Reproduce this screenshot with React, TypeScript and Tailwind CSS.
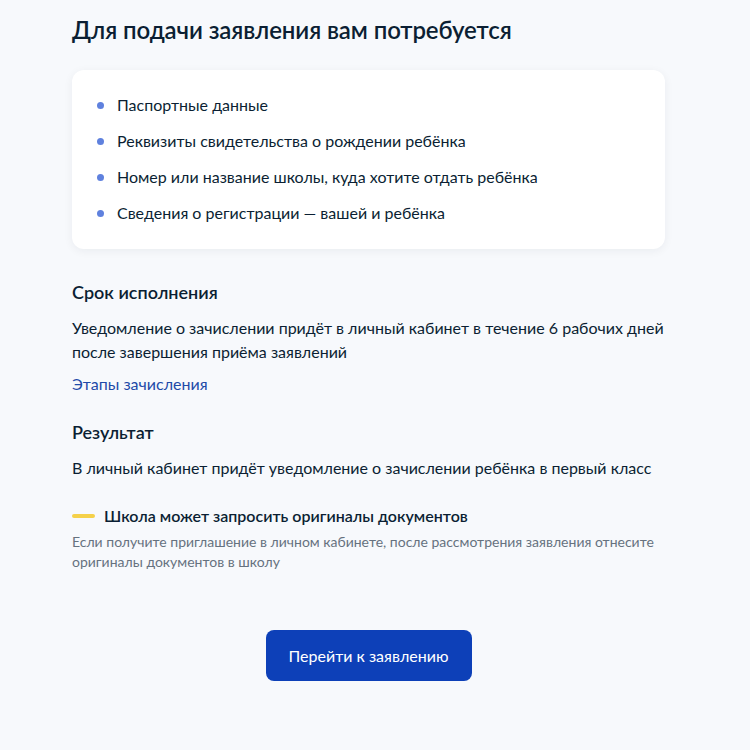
import React from "react";

const items = [
  "Паспортные данные",
  "Реквизиты свидетельства о рождении ребёнка",
  "Номер или название школы, куда хотите отдать ребёнка",
  "Сведения о регистрации — вашей и ребёнка",
];

export default function App() {
  return (
    <div
      className="min-h-[750px] w-[750px] bg-[#f7f9fc] text-[#0b1f33]"
      style={{ fontFamily: "Lato, 'Noto Sans', sans-serif" }}
    >
      <div className="ml-[72px] w-[593px] pt-[14px] pb-[68px]">
        <h1 className="text-[24px] leading-[32px] font-semibold tracking-[-0.1px]">
          Для подачи заявления вам потребуется
        </h1>
        <div className="mt-6 rounded-xl bg-white px-6 pt-[23px] pb-6 shadow-[0_2px_10px_rgba(11,31,51,0.06)]">
          <ul className="flex flex-col gap-3">
            {items.map((t) => (
              <li key={t} className="flex items-center text-[16px] leading-6">
                <span className="ml-[1px] mr-[13px] h-[7px] w-[7px] rounded-full bg-[#5f81de]" />
                {t}
              </li>
            ))}
          </ul>
        </div>
        <h2 className="mt-[31px] text-[18px] leading-6 font-semibold">Срок исполнения</h2>
        <p className="mt-3 text-[16px] leading-6">
          Уведомление о зачислении придёт в личный кабинет в течение 6 рабочих дней после
          завершения приёма заявлений
        </p>
        <a className="mt-2 block text-[16px] leading-6 text-[#1e4aa8]">Этапы зачисления</a>
        <h2 className="mt-6 text-[18px] leading-6 font-semibold">Результат</h2>
        <p className="mt-3 text-[16px] leading-6">
          В личный кабинет придёт уведомление о зачислении ребёнка в первый класс
        </p>
        <div className="mt-6 flex items-center text-[16px] leading-6 font-semibold">
          <span className="mr-[9px] h-[4px] w-[23px] rounded-sm bg-[#f5d14a]" />
          Школа может запросить оригиналы документов
        </div>
        <p className="mt-1 text-[14px] leading-5 text-[#66727f]">
          Если получите приглашение в личном кабинете, после рассмотрения заявления отнесите
          оригиналы документов в школу
        </p>
        <div className="mt-[58px] flex justify-center">
          <button className="h-[51px] w-[206px] rounded-lg bg-[#0d40b8] text-[16px] text-white">
            Перейти к заявлению
          </button>
        </div>
      </div>
    </div>
  );
}
